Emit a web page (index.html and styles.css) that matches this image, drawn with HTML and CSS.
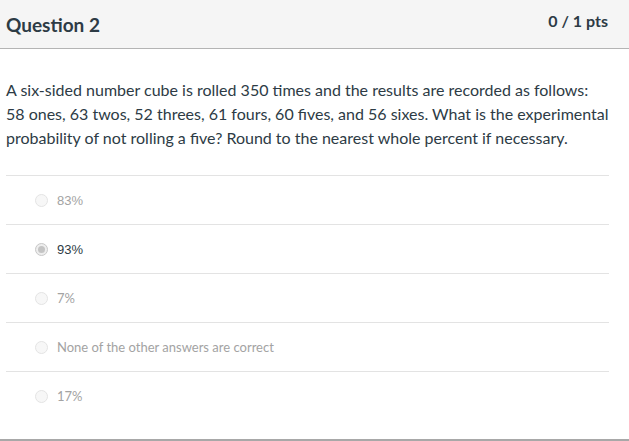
FILE: index.html
```html
<!DOCTYPE html>
<html>
<head>
<meta charset="utf-8">
<link rel="stylesheet" href="styles.css">
</head>
<body>
<div class="question">
  <div class="header">
    <h2 class="title">Question 2</h2>
    <div class="pts">0 / 1 pts</div>
  </div>
  <div class="content">
    <p class="text">A six-sided number cube is rolled 350 times and the results are recorded as follows: 58 ones, 63 twos, 52 threes, 61 fours, 60 fives, and 56 sixes. What is the experimental probability of not rolling a five? Round to the nearest whole percent if necessary.</p>
    <div class="answers">
      <div class="answer"><span class="radio"></span><span class="label arial">83%</span></div>
      <div class="answer selected"><span class="radio"></span><span class="label arial">93%</span></div>
      <div class="answer"><span class="radio"></span><span class="label">7%</span></div>
      <div class="answer"><span class="radio"></span><span class="label">None of the other answers are correct</span></div>
      <div class="answer"><span class="radio"></span><span class="label">17%</span></div>
    </div>
  </div>
</div>
</body>
</html>
```
FILE: styles.css
```css
html, body {
  margin: 0;
  padding: 0;
  background: #fff;
}
body {
  font-family: Lato, "Noto Sans", sans-serif;
  color: #2d3b45;
  width: 629px;
  height: 441px;
  overflow: hidden;
}
.question {
  border-bottom: 2px solid #a8a8a8;
}
.header {
  background: #f5f5f5;
  height: 48px;
  border-bottom: 1px solid #b4b4b4;
  display: flex;
  justify-content: space-between;
  align-items: flex-start;
  padding: 0 21px 0 6px;
}
.title {
  margin: 0;
  font-size: 19px;
  font-weight: 700;
  line-height: 24px;
  padding-top: 13px;
}
.pts {
  font-size: 16px;
  font-weight: 700;
  line-height: 20px;
  padding-top: 11px;
  color: #2d3b45;
}
.content {
  padding: 29px 20px 19px 6px;
}
.text {
  margin: 0 0 25px 0;
  font-size: 16px;
  line-height: 24px;
}
.answer {
  border-top: 1px solid #e3e3e3;
  height: 48px;
  display: flex;
  align-items: center;
  padding-left: 29px;
}
.radio {
  width: 13px;
  height: 13px;
  border-radius: 50%;
  border: 1px solid #e4e4e4;
  background: #f7f7f7;
  box-sizing: border-box;
  margin-right: 9px;
  position: relative;
  flex: none;
}
.selected .radio {
  border: 1px solid #c8c8c8;
  background: #eee;
}
.selected .radio::after {
  content: "";
  position: absolute;
  left: 2px;
  top: 2px;
  width: 7px;
  height: 7px;
  border-radius: 50%;
  background: #c4c4c4;
}
.label {
  font-size: 13px;
  color: #a3a3a3;
}
.arial {
  font-family: "Liberation Sans", Arial, sans-serif;
}
.selected .label {
  color: #2d3b45;
}
```
